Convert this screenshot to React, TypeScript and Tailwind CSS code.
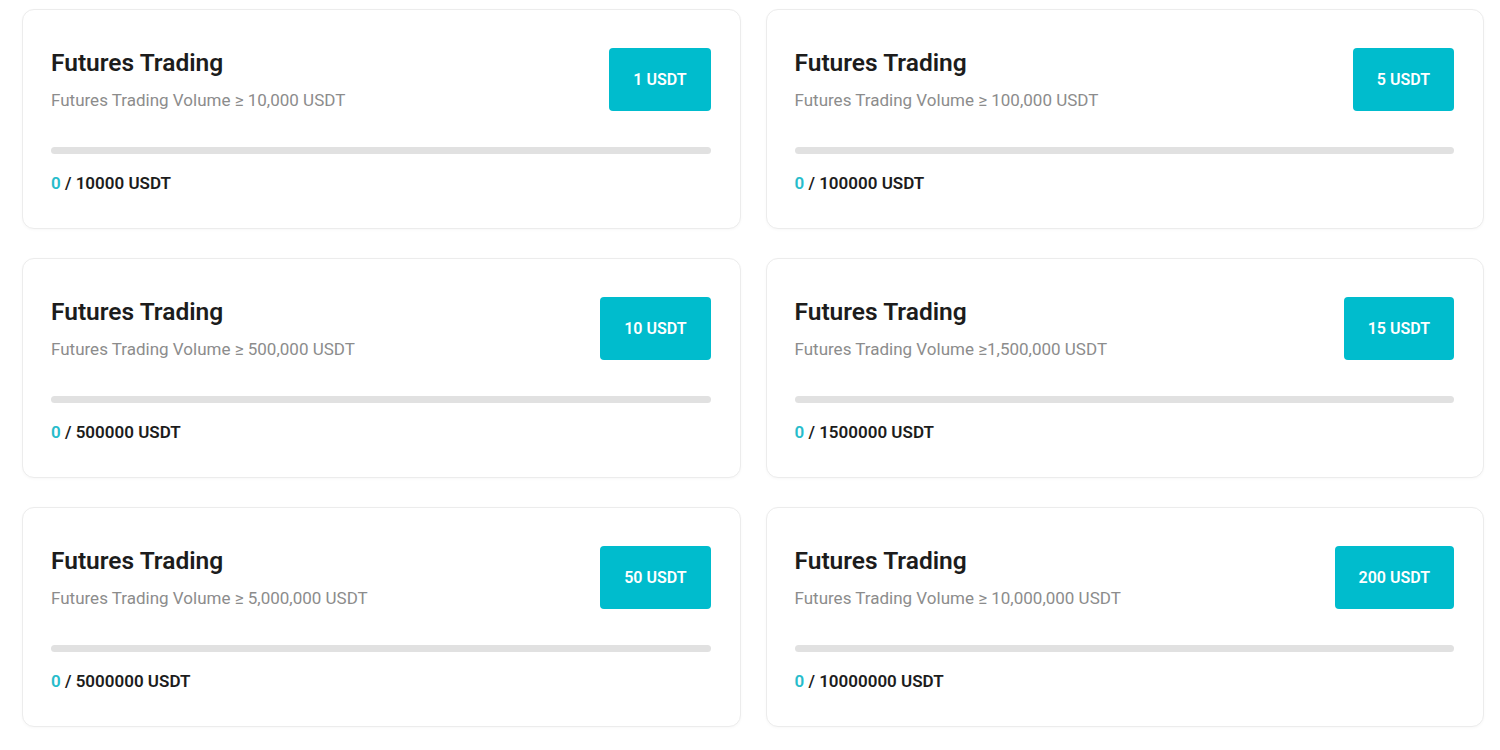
const tasks = [
  { goal: "10,000", target: "10000", reward: "1 USDT" },
  { goal: "100,000", target: "100000", reward: "5 USDT" },
  { goal: "500,000", target: "500000", reward: "10 USDT" },
  { goal: "1,500,000", target: "1500000", reward: "15 USDT", tight: true },
  { goal: "5,000,000", target: "5000000", reward: "50 USDT" },
  { goal: "10,000,000", target: "10000000", reward: "200 USDT" },
];

function TaskCard({ task }: { task: (typeof tasks)[number] }) {
  return (
    <div className="h-[220px] rounded-xl border border-[#ececec] bg-white pl-[28px] pr-[29px] pt-[37px] shadow-[0_1px_3px_rgba(0,0,0,0.03)]">
      <div className="flex items-start justify-between">
        <div>
          <p className="text-[24.5px] font-semibold leading-8 text-[#1c1c1c]">Futures Trading</p>
          <p className="mt-[9px] text-[17px] leading-6 text-[#8c8c8c]">
            Futures Trading Volume {task.tight ? "≥" : "≥ "}
            {task.goal} USDT
          </p>
        </div>
        <button className="mt-px h-[63px] rounded-[4px] bg-[#00bccd] px-6 text-[16px] font-semibold text-white">
          {task.reward}
        </button>
      </div>
      <div className="mt-[35px] h-[7px] rounded-full bg-[#e1e1e1]" />
      <p className="mt-[17px] text-[17px] font-semibold leading-6 text-[#1c1c1c]">
        <span className="text-[#26bccb]">0</span> / {task.target} USDT
      </p>
    </div>
  );
}

export default function App() {
  return (
    <div className="min-h-[750px] bg-white pl-[22px] pr-[16px] pt-[9px] font-['Roboto',sans-serif]">
      <div className="grid grid-cols-2 gap-x-[25px] gap-y-[29px]">
        {tasks.map((t) => (
          <TaskCard key={t.reward} task={t} />
        ))}
      </div>
    </div>
  );
}
